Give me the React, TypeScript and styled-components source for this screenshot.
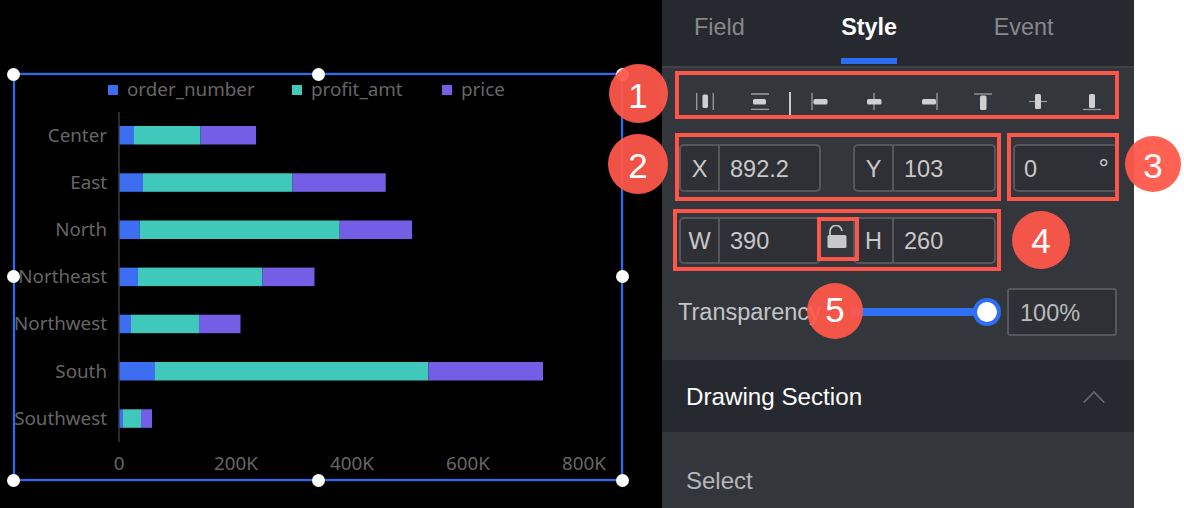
import React from 'react'
import styled, { createGlobalStyle } from 'styled-components'

const GlobalStyle = createGlobalStyle`
  html, body {
    margin: 0;
    padding: 0;
    background: #fff;
  }
  * {
    box-sizing: border-box;
  }
`

const Page = styled.div`
  position: relative;
  display: flex;
  width: 1184px;
  height: 508px;
  overflow: hidden;
  font-family: "Liberation Sans", Arial, sans-serif;
`

const ChartArea = styled.div`
  position: relative;
  flex: 0 0 662px;
  height: 508px;
  background: #000;
`

const ChartSvg = styled.svg`
  display: block;
  font-family: "Noto Sans", "Open Sans", sans-serif;
  font-size: 18.8px;
  fill: #666;
`

const Selection = styled.div`
  position: absolute;
  left: 13px;
  top: 73px;
  width: 610px;
  height: 408px;
  border: 2px solid #2a6cf0;
  box-shadow: 0 0 1px #2a6cf0, inset 0 0 1px #2a6cf0;
`

const Handle = styled.span<{ $x: number; $y: number }>`
  position: absolute;
  left: ${({ $x }) => $x - 6.5}px;
  top: ${({ $y }) => $y - 6.5}px;
  width: 13px;
  height: 13px;
  border-radius: 50%;
  background: #fff;
`

const Panel = styled.div`
  flex: 0 0 472px;
  height: 508px;
  background: #33363b;
  overflow: hidden;
`

const Tabs = styled.div`
  display: flex;
  gap: 96.5px;
  height: 68px;
  padding-left: 32px;
  background: #272930;
  border-bottom: 2px solid #3f4145;
`

const Tab = styled.div<{ $active?: boolean }>`
  height: 64px;
  padding-top: 14px;
  font-size: 23.4px;
  line-height: 27px;
  font-weight: ${({ $active }) => ($active ? 700 : 400)};
  color: ${({ $active }) => ($active ? '#fff' : '#87888b')};
  border-bottom: 6px solid ${({ $active }) => ($active ? '#2b6ef2' : 'transparent')};
`

const Toolbar = styled.div`
  display: flex;
  align-items: flex-start;
  height: 48px;
  padding: 24px 0 0 16px;
`

const ToolButton = styled.div`
  display: flex;
  justify-content: center;
  width: 54.5px;
  height: 19px;
`

const ToolDivider = styled.div`
  width: 2px;
  height: 23px;
  margin: 0 1.5px 0 2px;
  background: #c9c9c9;
`

const FieldRow = styled.div<{ $top: number }>`
  display: flex;
  margin-top: ${({ $top }) => $top}px;
  padding-left: 17px;
`

const Field = styled.div<{ $width: number; $left?: number; $height?: number }>`
  display: flex;
  width: ${({ $width }) => $width}px;
  height: ${({ $height }) => $height ?? 48}px;
  margin-left: ${({ $left }) => $left ?? 0}px;
  background: #2e3035;
  border: 2px solid #55575c;
  border-radius: 5px;
  font-size: 23.5px;
  line-height: ${({ $height }) => ($height ?? 48) - 2}px;
  color: #c8c8c8;
`

const FieldLabel = styled.div`
  flex: 0 0 39px;
  border-right: 2px solid #55575c;
  text-align: center;
`

const FieldValue = styled.div`
  flex: 1;
  padding-left: 10px;
`

const AngleValue = styled.div`
  display: flex;
  flex: 1;
  justify-content: space-between;
  padding: 0 8px 0 9px;
`

const Degree = styled.span`
  margin-top: -1px;
  font-size: 26px;
`

const LockSlot = styled.div`
  display: flex;
  flex: 0 0 32px;
  align-items: center;
  justify-content: center;
  padding-bottom: 5px;
  color: #c8c8c8;
`

const SliderRow = styled.div`
  display: flex;
  align-items: center;
  height: 48px;
  margin-top: 24px;
  padding-left: 16px;
`

const SliderLabel = styled.div`
  flex: 0 0 172px;
  font-size: 23.5px;
  color: #c4c4c6;
`

const Slider = styled.div`
  position: relative;
  flex: 0 0 151px;
  height: 8px;
`

const SliderTrack = styled.div`
  width: 137px;
  height: 8px;
  border-radius: 4px 0 0 4px;
  background: #2f6ff5;
`

const SliderThumb = styled.div`
  position: absolute;
  left: 123px;
  top: -10px;
  width: 28px;
  height: 28px;
  border-radius: 50%;
  background: #fff;
  border: 4px solid #2f6ff5;
`

const PercentBox = styled.div`
  width: 110px;
  height: 48px;
  margin-left: 6px;
  padding-left: 11px;
  background: #2e3035;
  border: 2px solid #55575c;
  border-radius: 3px;
  font-size: 23.5px;
  line-height: 46px;
  color: #b9babc;
`

const SectionBand = styled.div`
  display: flex;
  align-items: center;
  justify-content: space-between;
  height: 72px;
  margin-top: 24px;
  padding: 1px 29px 0 24px;
  background: #272930;
  color: #fff;
  font-size: 24.2px;
`

const SelectLabel = styled.div`
  padding: 36px 0 0 24px;
  font-size: 24px;
  line-height: 26px;
  color: #b6b7b9;
`

const Marker = styled.div<{ $x: number; $y: number; $w: number; $h: number }>`
  position: absolute;
  left: ${({ $x }) => $x}px;
  top: ${({ $y }) => $y}px;
  width: ${({ $w }) => $w}px;
  height: ${({ $h }) => $h}px;
  border: 4px solid #fb5649;
`

const Badge = styled.div<{ $x: number; $y: number; $r: number; $dy: number }>`
  position: absolute;
  left: ${({ $x, $r }) => $x - $r}px;
  top: ${({ $y, $r }) => $y - $r}px;
  width: ${({ $r }) => $r * 2}px;
  height: ${({ $r }) => $r * 2}px;
  border-radius: 50%;
  background: rgba(255, 88, 74, 0.94);
  color: #fff;
  font-size: 35px;
  line-height: ${({ $r, $dy }) => $r * 2 + $dy * 2}px;
  text-align: center;
`

const regions = [
  { name: 'Center', y: 126, stops: [134, 200.5, 256] },
  { name: 'East', y: 173.3, stops: [143, 292.5, 385.7] },
  { name: 'North', y: 220.5, stops: [139.7, 339.7, 412] },
  { name: 'Northeast', y: 267.6, stops: [138, 262.5, 314.5] },
  { name: 'Northwest', y: 314.7, stops: [131, 199, 240.5] },
  { name: 'South', y: 362, stops: [155, 428.3, 543] },
  { name: 'Southwest', y: 409.3, stops: [123, 141, 152] },
]

const seriesColors = ['#3d6df0', '#40c9bb', '#745ee6']

const legend = [
  { label: 'order_number', x: 108 },
  { label: 'profit_amt', x: 292 },
  { label: 'price', x: 442 },
]

const ticks = [
  { label: '0', x: 119 },
  { label: '200K', x: 236 },
  { label: '400K', x: 352 },
  { label: '600K', x: 468 },
  { label: '800K', x: 584 },
]

const BarChart = () => (
  <ChartSvg width="662" height="508" viewBox="0 0 662 508">
    {legend.map((item, i) => (
      <g key={item.label}>
        <rect x={item.x} y={85} width={10} height={10} fill={seriesColors[i]} />
        <text x={item.x + 19} y={96}>{item.label}</text>
      </g>
    ))}
    <line x1="119" y1="112" x2="119" y2="442" stroke="#3a3a3a" strokeWidth="1.5" />
    {regions.map(region => (
      <g key={region.name}>
        <text x={107} y={region.y + 15.5} textAnchor="end">{region.name}</text>
        {region.stops.map((stop, i) => {
          const start = i === 0 ? 119.5 : region.stops[i - 1]
          return <rect key={stop} x={start} y={region.y} width={stop - start} height={18.5} fill={seriesColors[i]} />
        })}
      </g>
    ))}
    {ticks.map(tick => (
      <text key={tick.label} x={tick.x} y={470} textAnchor="middle">{tick.label}</text>
    ))}
  </ChartSvg>
)

// alignment icons, all in an 18x19 box
const ToolIcon = ({ line, block }: { line: number[]; block: number[] }) => (
  <svg width="18" height="19" viewBox="0 0 18 19">
    <line x1={line[0]} y1={line[1]} x2={line[2]} y2={line[3]} stroke="#9b9c9f" strokeWidth="1.3" />
    <rect x={block[0]} y={block[1]} width={block[2]} height={block[3]} rx="1.5" fill="#cfcfd1" />
  </svg>
)

const LockIcon = () => (
  <svg width="20" height="26" viewBox="0 0 20 26">
    <path d="M3 10V7a6 6 0 0 1 12-1" fill="none" stroke="currentColor" strokeWidth="1.7" />
    <rect x="0.5" y="10" width="19" height="13" rx="1.5" fill="currentColor" />
  </svg>
)

const Chevron = () => (
  <svg width="22" height="12" viewBox="0 0 22 12">
    <path d="M0.7 11.5L11 1l10.3 10.5" fill="none" stroke="#6c6e72" strokeWidth="1.5" />
  </svg>
)

const App = () => {
  return (
    <Page>
      <GlobalStyle />
      <ChartArea>
        <BarChart />
        <Selection />
        <Handle $x={13.5} $y={74} />
        <Handle $x={318} $y={74} />
        <Handle $x={622} $y={74} />
        <Handle $x={13.5} $y={276} />
        <Handle $x={622} $y={276} />
        <Handle $x={13.5} $y={480} />
        <Handle $x={318} $y={480} />
        <Handle $x={622} $y={480} />
      </ChartArea>

      <Panel>
        <Tabs>
          <Tab>Field</Tab>
          <Tab $active>Style</Tab>
          <Tab>Event</Tab>
        </Tabs>

        <Toolbar>
          <ToolButton>
            <svg width="18" height="19" viewBox="0 0 18 19">
              <path d="M0.7 1v17M17.3 1v17" stroke="#9b9c9f" strokeWidth="1.3" />
              <rect x="6.5" y="2.5" width="5.5" height="13.5" rx="1.5" fill="#cfcfd1" />
            </svg>
          </ToolButton>
          <ToolButton>
            <svg width="18" height="19" viewBox="0 0 18 19">
              <path d="M0 2h18M0 17.3h18" stroke="#9b9c9f" strokeWidth="1.3" />
              <rect x="2" y="7" width="13" height="5.5" rx="1.5" fill="#cfcfd1" />
            </svg>
          </ToolButton>
          <ToolDivider />
          <ToolButton><ToolIcon line={[1, 1, 1, 18]} block={[2.5, 7, 14, 5.5]} /></ToolButton>
          <ToolButton><ToolIcon line={[9, 1, 9, 18]} block={[2, 7, 14.5, 5.5]} /></ToolButton>
          <ToolButton><ToolIcon line={[17, 1, 17, 18]} block={[2, 7, 14, 5.5]} /></ToolButton>
          <ToolButton><ToolIcon line={[0, 2, 18, 2]} block={[6, 3.5, 6.5, 14.5]} /></ToolButton>
          <ToolButton><ToolIcon line={[0, 9.5, 18, 9.5]} block={[6, 2, 6, 15]} /></ToolButton>
          <ToolButton><ToolIcon line={[0, 17.5, 18, 17.5]} block={[6, 2, 6, 14]} /></ToolButton>
        </Toolbar>

        <FieldRow $top={28}>
          <Field $width={142}>
            <FieldLabel>X</FieldLabel>
            <FieldValue>892.2</FieldValue>
          </Field>
          <Field $width={143} $left={32}>
            <FieldLabel>Y</FieldLabel>
            <FieldValue>103</FieldValue>
          </Field>
          <Field $width={106} $left={17}>
            <AngleValue>
              <span>0</span>
              <Degree>°</Degree>
            </AngleValue>
          </Field>
        </FieldRow>

        <FieldRow $top={25}>
          <Field $width={142} $height={47}>
            <FieldLabel>W</FieldLabel>
            <FieldValue>390</FieldValue>
          </Field>
          <LockSlot><LockIcon /></LockSlot>
          <Field $width={143} $height={47}>
            <FieldLabel>H</FieldLabel>
            <FieldValue>260</FieldValue>
          </Field>
        </FieldRow>

        <SliderRow>
          <SliderLabel>Transparency</SliderLabel>
          <Slider>
            <SliderTrack />
            <SliderThumb />
          </Slider>
          <PercentBox>100%</PercentBox>
        </SliderRow>

        <SectionBand>
          Drawing Section
          <Chevron />
        </SectionBand>

        <SelectLabel>Select</SelectLabel>
      </Panel>

      <Marker $x={675} $y={71} $w={444} $h={48} />
      <Marker $x={675} $y={133} $w={326} $h={68} />
      <Marker $x={1007} $y={133} $w={112} $h={68} />
      <Marker $x={673} $y={209} $w={328} $h={62} />
      <Marker $x={817} $y={217} $w={42} $h={44} />

      <Badge $x={638} $y={93} $r={29.5} $dy={2}>1</Badge>
      <Badge $x={638} $y={164} $r={30} $dy={2}>2</Badge>
      <Badge $x={1153} $y={164} $r={28} $dy={2}>3</Badge>
      <Badge $x={1041} $y={240} $r={29} $dy={1}>4</Badge>
      <Badge $x={835} $y={311} $r={28} $dy={-1}>5</Badge>
    </Page>
  )
}

export default App
